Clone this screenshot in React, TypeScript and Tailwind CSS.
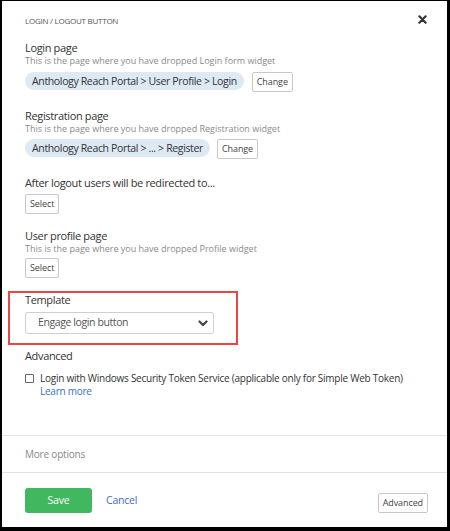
import React from "react";

function Btn({ children, className = "" }: { children: React.ReactNode; className?: string }) {
  return (
    <button className={`h-[20px] border border-[#c8c8c8] bg-white px-[4px] text-[9px] leading-[18px] tracking-[-0.1px] text-[#444] rounded-[2px] ${className}`}>
      {children}
    </button>
  );
}

export default function App() {
  return (
    <div
      className="w-[450px] h-[531px] bg-white border-l-2 border-t border-r-[3px] border-b-[4px] border-black text-[#333] flex flex-col"
      style={{ fontFamily: '"Open Sans", "Liberation Sans", sans-serif' }}
    >
      <div className="flex items-center justify-between pl-[23px] pr-[20px] pt-[14px]">
        <div className="text-[8px] leading-[12px] text-[#555] tracking-[-0.25px]">LOGIN / LOGOUT BUTTON</div>
        <svg width="9" height="9" viewBox="0 0 10 10" className="mt-[-4px]">
          <path d="M1.5 1.5 L8.5 8.5 M8.5 1.5 L1.5 8.5" stroke="#333" strokeWidth="2.4" strokeLinecap="round" />
        </svg>
      </div>

      <div className="pl-[23px] flex flex-col">
        <div className="mt-[14px] text-[11px] leading-[14px] tracking-[-0.35px]">Login page</div>
        <div className="text-[9px] leading-[12px] text-[#8a8a8a]">This is the page where you have dropped Login form widget</div>
        <div className="mt-[5px] flex items-start gap-[8px]">
          <div className="h-[18px] rounded-full bg-[#dde9f3] px-[7px] text-[10.5px] leading-[18px] tracking-[-0.35px] text-[#333]">
            Anthology Reach Portal &gt; User Profile &gt; Login
          </div>
          <Btn>Change</Btn>
        </div>

        <div className="mt-[17px] text-[11px] leading-[14px] tracking-[-0.35px]">Registration page</div>
        <div className="text-[9px] leading-[12px] text-[#8a8a8a]">This is the page where you have dropped Registration widget</div>
        <div className="mt-[4px] flex items-start gap-[7px]">
          <div className="h-[18px] rounded-full bg-[#dde9f3] px-[7px] text-[10.5px] leading-[18px] tracking-[-0.35px] text-[#333]">
            Anthology Reach Portal &gt; ... &gt; Register
          </div>
          <Btn>Change</Btn>
        </div>

        <div className="mt-[17px] text-[11px] leading-[14px] tracking-[-0.35px]">After logout users will be redirected to...</div>
        <div className="mt-[4px] flex">
          <Btn>Select</Btn>
        </div>

        <div className="mt-[15px] text-[11px] leading-[14px] tracking-[-0.35px]">User profile page</div>
        <div className="text-[9px] leading-[12px] text-[#8a8a8a]">This is the page where you have dropped Profile widget</div>
        <div className="mt-[3px] flex">
          <Btn>Select</Btn>
        </div>
      </div>

      <div className="ml-[6px] mt-[13px] w-[230px] border-2 border-[#ef4444] pl-[15px] pb-[9px]">
        <div className="text-[11px] leading-[14px] tracking-[-0.35px]">Template</div>
        <div className="mt-[5px] h-[22px] w-[189px] rounded-[3px] border border-[#cfcfcf] bg-white flex items-center justify-between pl-[12px] pr-[5px]">
          <span className="text-[10.5px] tracking-[-0.4px] text-[#555]">Engage login button</span>
          <svg width="10" height="7" viewBox="0 0 10 7">
            <path d="M1.5 1.5 L5 5 L8.5 1.5" stroke="#444" strokeWidth="2.2" fill="none" strokeLinecap="round" strokeLinejoin="round" />
          </svg>
        </div>
      </div>

      <div className="pl-[23px] flex flex-col">
        <div className="mt-[4px] text-[11px] leading-[14px] tracking-[-0.35px]">Advanced</div>
        <div className="mt-[9px] flex items-start gap-[6px]">
          <div className="mt-[2px] w-[9px] h-[9px] border border-[#666] rounded-[1px] bg-white shrink-0" />
          <div className="text-[10px] leading-[13px] tracking-[-0.25px] text-[#333]">
            <div className="whitespace-nowrap">Login with Windows Security Token Service (applicable only for Simple Web Token)</div>
            <div className="text-[#3a6fc4]">Learn more</div>
          </div>
        </div>
      </div>

      <div className="mt-[37px] border-t border-[#e2e2e2] h-[37px] flex items-center pl-[23px]">
        <span className="text-[10px] tracking-[-0.2px] text-[#888]">More options</span>
      </div>
      <div className="border-t border-[#e2e2e2] flex items-end pl-[23px] pr-[19px] pt-[15px]">
        <button className="h-[25px] w-[67px] rounded-[3px] bg-[#41b75f] text-white text-[10.5px] tracking-[-0.2px]">Save</button>
        <span className="ml-[14px] self-center text-[10.5px] tracking-[-0.2px] text-[#3a6fc4]">Cancel</span>
        <div className="ml-auto flex">
          <Btn>Advanced</Btn>
        </div>
      </div>
    </div>
  );
}
